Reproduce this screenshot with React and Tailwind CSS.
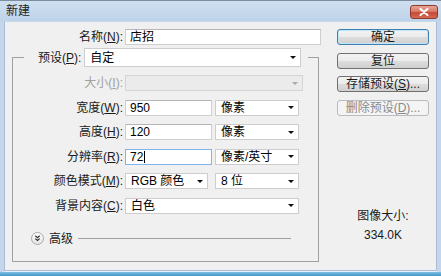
import React from 'react'

function Label({ children, w = 'w-[112px]', dim }) {
  return (
    <div className={`${w} shrink-0 text-right pr-[2px] ${dim ? 'text-[#a0a0a0]' : 'text-[#1a1a1a]'}`}>
      {children}
    </div>
  )
}

function Arrow({ dim }) {
  return (
    <svg width="6" height="3" viewBox="0 0 6 3" className="shrink-0">
      <path d="M0 0H6L3 3Z" fill={dim ? '#a8a8a8' : '#111'} />
    </svg>
  )
}

function Select({ value, w, h = 'h-[16px]', dim }) {
  return (
    <div
      className={`${w} ${h} shrink-0 flex items-center justify-between pl-[5px] pr-[4px] border ${
        dim ? 'bg-[#ebebeb] border-[#d4d4d4]' : 'bg-white border-[#cdcdcd]'
      }`}
    >
      <span>{value}</span>
      <Arrow dim={dim} />
    </div>
  )
}

function Input({ value, w, focus }) {
  return (
    <div
      className={`${w} h-[16px] shrink-0 flex items-center pl-[4px] border bg-white ${
        focus ? 'border-[#7eb4ea]' : 'border-[#cfcfcf] border-t-[#b5b5b5]'
      }`}
    >
      <span>{value}</span>
      {focus && <span className="inline-block w-px h-[12px] bg-black ml-[1px]" />}
    </div>
  )
}

function Btn({ children, primary, disabled }) {
  let cls = 'border-[#707070] bg-[linear-gradient(#f3f3f3_0%,#ebebeb_50%,#dddddd_50%,#d0d0d0_100%)] text-[#1a1a1a]'
  if (primary)
    cls = 'border-[#3c7fb1] shadow-[inset_0_0_0_1px_#bfe5f8] bg-[linear-gradient(#f3f3f3_0%,#ebebeb_50%,#dddddd_50%,#d0d0d0_100%)] text-[#1a1a1a]'
  if (disabled) cls = 'border-[#b8bcbf] bg-[#f4f4f4] text-[#8a8a8a]'
  return (
    <div className={`w-[92px] h-[16px] flex items-center justify-center rounded-[3px] border leading-none ${cls}`}>
      {children}
    </div>
  )
}

function Row({ children }) {
  return <div className="flex items-center h-[16px]">{children}</div>
}

export default function App() {
  return (
    <div className="w-[441px] h-[276px] flex flex-col bg-[#c3d6eb] border-t border-[#7d8ea3] text-[12px] font-['Liberation_Sans','Noto_Sans_CJK_SC',sans-serif]">
      {/* Title bar */}
      <div className="h-[20px] shrink-0 flex items-center justify-between pl-[6px] pr-[3px] bg-gradient-to-b from-[#cfdff0] to-[#bed3ea]">
        <span className="text-[#1e1e1e]">新建</span>
        <div className="w-[28px] h-[14px] mt-[2px] flex items-center justify-center rounded-[3px] border border-[#8e3a2f] bg-[linear-gradient(#e8a597_0%,#d97b68_45%,#c74a35_55%,#d46a52_100%)]">
          <svg width="10" height="8" viewBox="0 0 10 8">
            <path d="M1.5 1L8.5 7M8.5 1L1.5 7" stroke="#fff" strokeWidth="2" strokeLinecap="round" />
          </svg>
        </div>
      </div>

      {/* Body */}
      <div className="flex-1 flex flex-col px-[4px]">
        <div className="flex-1 flex bg-[#f0f0f0] border border-[#a9bdd6] border-t-[#c9d8ea]">
          {/* Left column */}
          <div className="w-[315px] shrink-0 pl-[7px] pt-[7px]">
            <Row>
              <Label w="w-[113px]">名称(<u>N</u>):</Label>
              <Input value="店招" w="w-[196px]" />
            </Row>

            <fieldset className="mt-[3px] w-[307px] border border-[#a0a0a0] pb-[15px]">
              <legend className="ml-[11px] pl-[14px] pr-[7px]">
                <div className="flex items-center">
                  <span className="pr-[3px] text-[#1a1a1a]">预设(<u>P</u>):</span>
                  <Select value="自定" w="w-[217px]" h="h-[19px]" />
                </div>
              </legend>

              <div className="flex flex-col gap-[8.5px] pt-[8px]">
                <Row>
                  <Label dim>大小(<u>I</u>):</Label>
                  <Select value="" w="w-[178px]" dim />
                </Row>
                <Row>
                  <Label>宽度(<u>W</u>):</Label>
                  <Input value="950" w="w-[87px]" />
                  <div className="ml-[3px]">
                    <Select value="像素" w="w-[84px]" />
                  </div>
                </Row>
                <Row>
                  <Label>高度(<u>H</u>):</Label>
                  <Input value="120" w="w-[87px]" />
                  <div className="ml-[3px]">
                    <Select value="像素" w="w-[84px]" />
                  </div>
                </Row>
                <Row>
                  <Label>分辨率(<u>R</u>):</Label>
                  <Input value="72" w="w-[87px]" focus />
                  <div className="ml-[3px]">
                    <Select value="像素/英寸" w="w-[84px]" />
                  </div>
                </Row>
                <Row>
                  <Label>颜色模式(<u>M</u>):</Label>
                  <Select value="RGB 颜色" w="w-[83px]" />
                  <div className="ml-[7px]">
                    <Select value="8 位" w="w-[84px]" />
                  </div>
                </Row>
                <Row>
                  <Label>背景内容(<u>C</u>):</Label>
                  <Select value="白色" w="w-[174px]" />
                </Row>
              </div>

              {/* Advanced */}
              <div className="mt-[18px] h-[14px] flex items-center pl-[18px] pr-[27px]">
                <svg width="13" height="13" viewBox="0 0 13 13" className="shrink-0">
                  <defs>
                    <linearGradient id="adv" x1="0" y1="0" x2="0" y2="1">
                      <stop offset="0" stopColor="#ffffff" />
                      <stop offset="1" stopColor="#e2e2e2" />
                    </linearGradient>
                  </defs>
                  <circle cx="6.5" cy="6.5" r="6" fill="url(#adv)" stroke="#a8a8a8" />
                  <path d="M4.3 3.8L6.5 5.6L8.7 3.8M4.3 6.6L6.5 8.4L8.7 6.6" fill="none" stroke="#333" strokeWidth="1.2" />
                </svg>
                <span className="ml-[5px] text-[#1a1a1a]">高级</span>
                <div className="ml-[5px] flex-1 h-px bg-[#a0a0a0]" />
              </div>
            </fieldset>
          </div>

          {/* Right column */}
          <div className="flex-1 flex flex-col items-start pl-[17px] pt-[7px]">
            <div className="flex flex-col gap-[7.5px]">
              <Btn primary>确定</Btn>
              <Btn>复位</Btn>
              <Btn>存储预设(<u>S</u>)...</Btn>
              <Btn disabled>删除预设(<u>D</u>)...</Btn>
            </div>
            <div className="w-[92px] mt-[92px] flex flex-col items-center text-[#1a1a1a] leading-[16px]">
              <span>图像大小:</span>
              <span className="mt-[3px]">334.0K</span>
            </div>
          </div>
        </div>
        <div className="h-[1px] shrink-0 bg-[#e6eef7]" />
      </div>
      <div className="h-[4px] shrink-0 bg-gradient-to-b from-[#7fbde0] to-[#3d98c9]" />
    </div>
  )
}
